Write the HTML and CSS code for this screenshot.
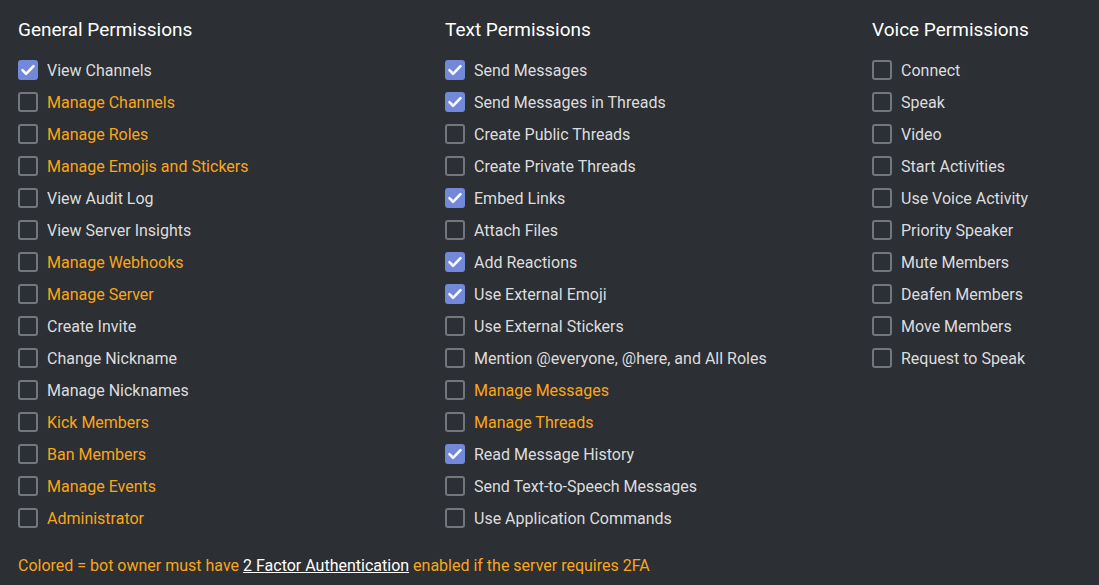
FILE: index.html
```html
<!DOCTYPE html>
<html>
<head>
<meta charset="utf-8">
<link rel="stylesheet" href="styles.css">
</head>
<body>
<div class="page">
  <div class="columns">
    <section class="col">
      <h2>General Permissions</h2>
      <ul>
        <li><span class="box checked"><svg viewBox="0 0 20 20"><path d="M4.5 10.2l3.6 3.6 7.4-7.6"/></svg></span><span>View Channels</span></li>
        <li class="warn"><span class="box"></span><span>Manage Channels</span></li>
        <li class="warn"><span class="box"></span><span>Manage Roles</span></li>
        <li class="warn"><span class="box"></span><span>Manage Emojis and Stickers</span></li>
        <li><span class="box"></span><span>View Audit Log</span></li>
        <li><span class="box"></span><span>View Server Insights</span></li>
        <li class="warn"><span class="box"></span><span>Manage Webhooks</span></li>
        <li class="warn"><span class="box"></span><span>Manage Server</span></li>
        <li><span class="box"></span><span>Create Invite</span></li>
        <li><span class="box"></span><span>Change Nickname</span></li>
        <li><span class="box"></span><span>Manage Nicknames</span></li>
        <li class="warn"><span class="box"></span><span>Kick Members</span></li>
        <li class="warn"><span class="box"></span><span>Ban Members</span></li>
        <li class="warn"><span class="box"></span><span>Manage Events</span></li>
        <li class="warn"><span class="box"></span><span>Administrator</span></li>
      </ul>
    </section>
    <section class="col">
      <h2>Text Permissions</h2>
      <ul>
        <li><span class="box checked"><svg viewBox="0 0 20 20"><path d="M4.5 10.2l3.6 3.6 7.4-7.6"/></svg></span><span>Send Messages</span></li>
        <li><span class="box checked"><svg viewBox="0 0 20 20"><path d="M4.5 10.2l3.6 3.6 7.4-7.6"/></svg></span><span>Send Messages in Threads</span></li>
        <li><span class="box"></span><span>Create Public Threads</span></li>
        <li><span class="box"></span><span>Create Private Threads</span></li>
        <li><span class="box checked"><svg viewBox="0 0 20 20"><path d="M4.5 10.2l3.6 3.6 7.4-7.6"/></svg></span><span>Embed Links</span></li>
        <li><span class="box"></span><span>Attach Files</span></li>
        <li><span class="box checked"><svg viewBox="0 0 20 20"><path d="M4.5 10.2l3.6 3.6 7.4-7.6"/></svg></span><span>Add Reactions</span></li>
        <li><span class="box checked"><svg viewBox="0 0 20 20"><path d="M4.5 10.2l3.6 3.6 7.4-7.6"/></svg></span><span>Use External Emoji</span></li>
        <li><span class="box"></span><span>Use External Stickers</span></li>
        <li><span class="box"></span><span>Mention @everyone, @here, and All Roles</span></li>
        <li class="warn"><span class="box"></span><span>Manage Messages</span></li>
        <li class="warn"><span class="box"></span><span>Manage Threads</span></li>
        <li><span class="box checked"><svg viewBox="0 0 20 20"><path d="M4.5 10.2l3.6 3.6 7.4-7.6"/></svg></span><span>Read Message History</span></li>
        <li><span class="box"></span><span>Send Text-to-Speech Messages</span></li>
        <li><span class="box"></span><span>Use Application Commands</span></li>
      </ul>
    </section>
    <section class="col">
      <h2>Voice Permissions</h2>
      <ul>
        <li><span class="box"></span><span>Connect</span></li>
        <li><span class="box"></span><span>Speak</span></li>
        <li><span class="box"></span><span>Video</span></li>
        <li><span class="box"></span><span>Start Activities</span></li>
        <li><span class="box"></span><span>Use Voice Activity</span></li>
        <li><span class="box"></span><span>Priority Speaker</span></li>
        <li><span class="box"></span><span>Mute Members</span></li>
        <li><span class="box"></span><span>Deafen Members</span></li>
        <li><span class="box"></span><span>Move Members</span></li>
        <li><span class="box"></span><span>Request to Speak</span></li>
      </ul>
    </section>
  </div>
  <p class="note">Colored = bot owner must have <a href="#">2 Factor Authentication</a> enabled if the server requires 2FA</p>
</div>
</body>
</html>
```
FILE: styles.css
```css
html, body {
  margin: 0;
  padding: 0;
  background: #2c2f33;
}
body {
  font-family: Roboto, "Liberation Sans", sans-serif;
  color: #dcddde;
  height: 585px;
  overflow: hidden;
}
.page {
  padding: 17px 0 0 18px;
}
.columns {
  display: grid;
  grid-template-columns: 427px 427px 1fr;
}
h2 {
  margin: 0 0 11px 0;
  font-size: 19px;
  line-height: 26px;
  font-weight: 400;
  color: #ffffff;
}
ul {
  list-style: none;
  margin: 0;
  padding: 0;
}
li {
  display: flex;
  align-items: center;
  gap: 9px;
  height: 32px;
  font-size: 16px;
  color: #dcddde;
}
li.warn {
  color: #faa61a;
}
.box {
  box-sizing: border-box;
  width: 20px;
  height: 20px;
  border: 2px solid #72767d;
  border-radius: 3px;
  flex: none;
  display: flex;
}
.box.checked {
  background: #7289da;
  border: none;
}
.box svg {
  width: 20px;
  height: 20px;
}
.box svg path {
  fill: none;
  stroke: #ffffff;
  stroke-width: 2.6;
  stroke-linecap: round;
  stroke-linejoin: round;
}
.note {
  margin: 22px 0 0 0;
  font-size: 16px;
  line-height: 20px;
  color: #faa61a;
}
.note a {
  color: #ffffff;
  text-decoration: underline;
}
```
